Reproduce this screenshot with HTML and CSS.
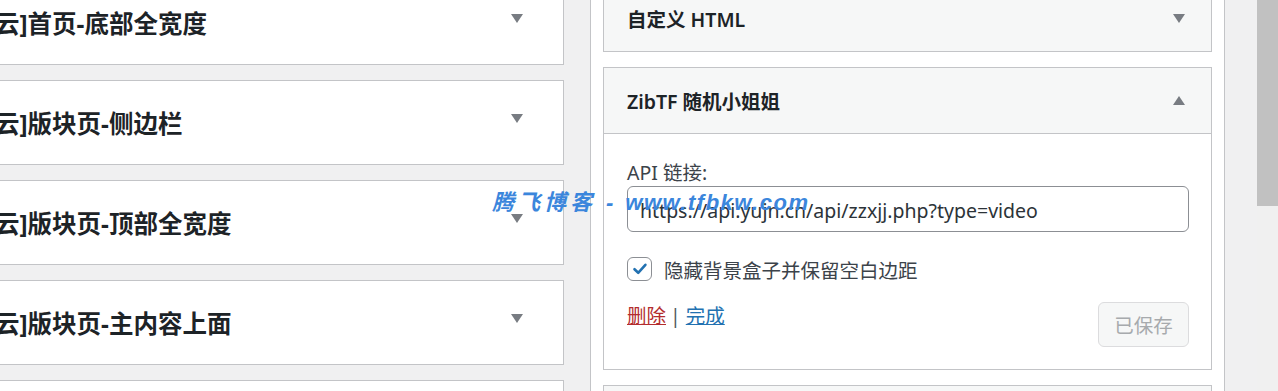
FILE: index.html
```html
<!DOCTYPE html>
<html lang="zh-CN">
<head>
    <meta charset="UTF-8">
    <meta name="viewport" content="width=device-width, initial-scale=1.0">
    <title>小工具</title>
    <link rel="stylesheet" href="styles.css">
</head>
<body>
    <div class="screen">
        <div class="sidebar-list">
            <div class="sidebar-card">
                <h2 class="sidebar-name">云]首页-底部全宽度</h2>
                <span class="arrow arrow-down"></span>
            </div>
            <div class="sidebar-card">
                <h2 class="sidebar-name">云]版块页-侧边栏</h2>
                <span class="arrow arrow-down"></span>
            </div>
            <div class="sidebar-card">
                <h2 class="sidebar-name">云]版块页-顶部全宽度</h2>
                <span class="arrow arrow-down"></span>
            </div>
            <div class="sidebar-card">
                <h2 class="sidebar-name">云]版块页-主内容上面</h2>
                <span class="arrow arrow-down"></span>
            </div>
            <div class="sidebar-card">
                <h2 class="sidebar-name">云]版块页-主内容下面</h2>
                <span class="arrow arrow-down"></span>
            </div>
        </div>

        <div class="widget-holder">
            <div class="widget-stack">
                <div class="widget">
                    <div class="widget-top">
                        <h3 class="widget-title">自定义 HTML</h3>
                        <span class="arrow arrow-down small"></span>
                    </div>
                </div>

                <div class="widget">
                    <div class="widget-top open">
                        <h3 class="widget-title">ZibTF 随机小姐姐</h3>
                        <span class="arrow arrow-up small"></span>
                    </div>
                    <div class="widget-inside">
                        <label class="field-label" for="api-url">API 链接:</label>
                        <input class="field-input" id="api-url" type="text" value="https://api.yujn.cn/api/zzxjj.php?type=video">
                        <label class="check-row">
                            <span class="check-box">
                                <svg width="16" height="16" viewBox="0 0 16 16"><path d="M2.5 8.2 L6.2 11.8 L13.4 3.8" fill="none" stroke="#2271b1" stroke-width="2.6" stroke-linecap="round" stroke-linejoin="round"/></svg>
                            </span>
                            <span>隐藏背景盒子并保留空白边距</span>
                        </label>
                        <div class="widget-actions">
                            <div class="action-links">
                                <a href="#" class="link-delete">删除</a><span class="sep">|</span><a href="#" class="link-done">完成</a>
                            </div>
                            <button class="save-btn" disabled>已保存</button>
                        </div>
                    </div>
                </div>

                <div class="widget">
                    <div class="widget-top">
                        <h3 class="widget-title">&nbsp;</h3>
                    </div>
                </div>
            </div>
        </div>

        <div class="scrollbar">
            <div class="scroll-thumb"></div>
        </div>

        <div class="watermark"><span class="wm-name">腾飞博客</span><span class="wm-dash">-</span><span class="wm-url">www.tfbkw.com</span></div>
    </div>
</body>
</html>
```

FILE: styles.css
```css
body {
    margin: 0;
    background: #f0f0f1;
    font-family: "Noto Sans", "Noto Sans CJK SC", sans-serif;
    color: #1d2327;
    overflow: hidden;
}
.screen {
    position: relative;
    display: flex;
    height: 391px;
    overflow: hidden;
}

/* left: sidebar areas */
.sidebar-list {
    flex: none;
    width: 604px;
    margin-left: -40px;
    margin-top: -20px;
    display: flex;
    flex-direction: column;
    gap: 15px;
}
.sidebar-card {
    flex: none;
    box-sizing: border-box;
    height: 85px;
    background: #fff;
    border: 1px solid #c3c4c7;
    display: flex;
    align-items: center;
    padding: 0 40px 0 34px;
}
.sidebar-name {
    flex: 1;
    margin: 0;
    font-size: 24.5px;
    font-weight: 700;
    white-space: nowrap;
}
.arrow {
    width: 0;
    height: 0;
    border-left: 6px solid transparent;
    border-right: 6px solid transparent;
}
.arrow-down {
    border-top: 9px solid #787c82;
    margin-bottom: 8px;
}
.arrow-up {
    border-bottom: 9px solid #787c82;
}
.arrow.small {
    margin: 0;
}

/* right: available widgets */
.widget-holder {
    flex: none;
    box-sizing: border-box;
    width: 635px;
    margin-left: 26px;
    padding: 0 12px;
    background: #fff;
    border-left: 1px solid #c3c4c7;
    border-right: 1px solid #c3c4c7;
}
.widget-stack {
    margin-top: -15px;
    display: flex;
    flex-direction: column;
    gap: 15px;
}
.widget {
    border: 1px solid #c3c4c7;
    background: #fff;
}
.widget-top {
    height: 65px;
    background: #f6f7f7;
    display: flex;
    align-items: center;
    padding: 0 26px 0 23px;
}
.widget-top.open {
    border-bottom: 1px solid #c3c4c7;
}
.widget-title {
    flex: 1;
    margin: 0;
    font-size: 19.5px;
    font-weight: 600;
}
.widget-inside {
    padding: 27px 22px 22px 23px;
}
.field-label {
    display: block;
    font-size: 19.5px;
    line-height: 24px;
    color: #3c434a;
}
.field-input {
    display: block;
    box-sizing: border-box;
    width: 100%;
    height: 46px;
    margin-top: 1px;
    padding: 2px 12px 0;
    border: 1px solid #8c8f94;
    border-radius: 6px;
    font-family: "Noto Sans", sans-serif;
    font-size: 19.5px;
    color: #2c3338;
    background: #fff;
}
.check-row {
    display: flex;
    align-items: center;
    gap: 12px;
    margin-top: 25px;
    height: 24px;
    font-size: 19.5px;
    color: #3c434a;
}
.check-box {
    box-sizing: border-box;
    width: 25px;
    height: 24px;
    border: 1px solid #8c8f94;
    border-radius: 6px;
    background: #fff;
    display: flex;
    align-items: center;
    justify-content: center;
}
.widget-actions {
    margin-top: 21px;
    display: flex;
    justify-content: space-between;
    align-items: flex-start;
}
.action-links {
    font-size: 19.5px;
    line-height: 28px;
    color: #50575e;
}
.sep {
    margin: 0 5px 0 4px;
}
.link-delete {
    color: #b32d2e;
}
.link-done {
    color: #2271b1;
}
.save-btn {
    box-sizing: border-box;
    width: 91px;
    height: 45px;
    padding: 0;
    border: 1px solid #dcdcde;
    border-radius: 6px;
    background: #f6f7f7;
    color: #a7aaad;
    font-family: "Noto Sans CJK SC", sans-serif;
    font-size: 19.5px;
}

/* page scrollbar */
.scrollbar {
    flex: none;
    width: 21px;
    margin-left: 32px;
    background: #f0f0f0;
}
.scroll-thumb {
    height: 206px;
    background: #c1c1c1;
}

/* watermark over the page */
.watermark {
    position: absolute;
    left: 492px;
    top: 184px;
    font-family: "Liberation Sans", "Noto Sans CJK SC", sans-serif;
    font-size: 22px;
    font-weight: 700;
    font-style: italic;
    color: #3b86dc;
    white-space: nowrap;
}
.wm-name {
    letter-spacing: 4px;
}
.wm-dash {
    margin: 0 12px 0 10px;
}
.wm-url {
    letter-spacing: 1.5px;
}
```
